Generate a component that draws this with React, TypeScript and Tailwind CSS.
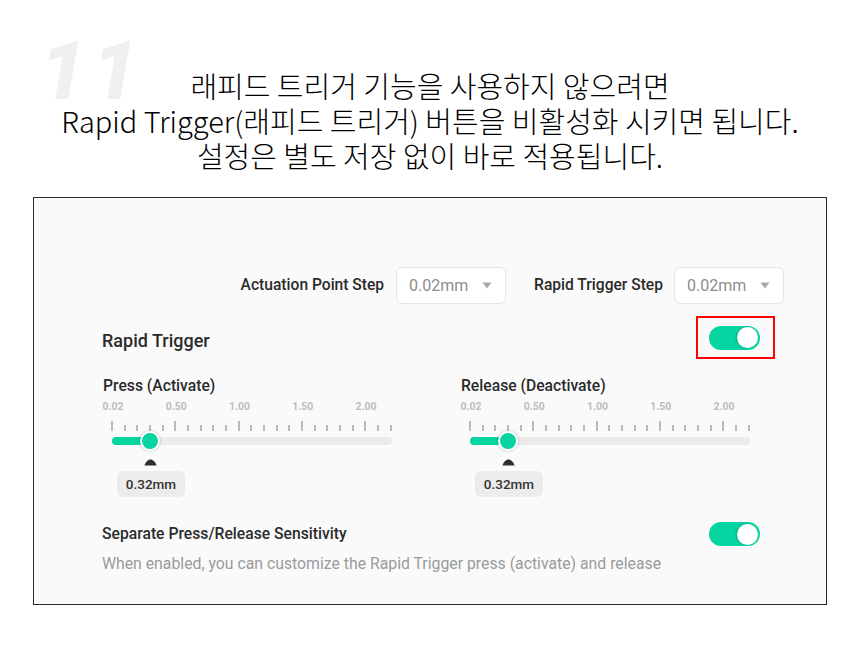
import React from "react";

const TEAL = "bg-[#06d4a1]";

function Toggle() {
  return (
    <div className={`w-[51px] h-[24px] rounded-full ${TEAL} flex items-center justify-end pr-[2px]`}>
      <div className="w-[21px] h-[21px] rounded-full bg-white shadow-[-1px_0_2px_rgba(0,0,0,0.2)]" />
    </div>
  );
}

function Select() {
  return (
    <div className="w-[110px] h-[37px] bg-white border border-[#e6e6e6] rounded-[6px] flex items-center justify-between pl-[12px] pr-[13px]">
      <span className="text-[16px] text-[#8d8d8d]">0.02mm</span>
      <svg width="10" height="7" viewBox="0 0 10 7">
        <path d="M0.5 0.5 H9.5 L5 6.5 Z" fill="#a9a9a9" />
      </svg>
    </div>
  );
}

const labels = ["0.02", "0.50", "1.00", "1.50", "2.00"];

function Slider({ title }: { title: string }) {
  const ticks = Array.from({ length: 23 }, (_, i) => i);
  return (
    <div className="flex flex-col w-[358px]">
      <div className="text-[15.7px] leading-[20px] font-medium text-[#2b2b2b] pl-[1px]">{title}</div>
      <div className="mt-[5px] ml-[-4px] w-[283px] flex justify-between">
        {labels.map((l) => (
          <span key={l} className="w-[30px] text-center text-[10.5px] leading-[12px] font-bold text-[#bdbdbd]">
            {l}
          </span>
        ))}
      </div>
      <div className="mt-[8px] ml-[9px] w-[281px] h-[10px] flex justify-between items-end">
        {ticks.map((i) => (
          <div key={i} className={`w-[2px] bg-[#bababa] ${i % 5 === 0 ? "h-[10px]" : "h-[6px]"}`} />
        ))}
      </div>
      <div className="relative mt-[6px] ml-[10px] w-[280px] h-[8px] rounded-full bg-[#ebebeb]">
        <div className={`absolute left-0 top-0 h-[8px] w-[40px] rounded-full ${TEAL}`} />
        <div className={`absolute left-[28px] top-[-6px] w-[20px] h-[20px] rounded-full ${TEAL} border-2 border-white shadow-[0_0_3px_rgba(0,0,0,0.25)]`} />
      </div>
      <svg className="mt-[14px] ml-[42px]" width="13" height="7" viewBox="0 0 13 7">
        <path d="M0.5 6.5 C1.5 3 4 0.5 6.5 0.5 C9 0.5 11.5 3 12.5 6.5 Z" fill="#2f2f2f" />
      </svg>
      <div className="mt-[5px] ml-[15px] w-[68px] h-[26px] rounded-[6px] bg-[#ececec] flex items-center justify-center text-[13.5px] font-medium text-[#333]">
        0.32mm
      </div>
    </div>
  );
}

export default function App() {
  return (
    <div className="relative w-[860px] h-[651px] bg-white overflow-hidden font-['Roboto',sans-serif]">
      {/* big step number */}
      <div className="absolute left-[40px] top-[30px] text-[82px] leading-none font-black italic tracking-[6px] text-[#f0f0f0] font-['Roboto',sans-serif]">
        11
      </div>

      {/* title */}
      <div className="relative pt-[68px] text-center text-[29px] leading-[35px] font-light text-black font-['Noto_Sans_CJK_KR','Noto_Sans',sans-serif]">
        <p>래피드 트리거 기능을 사용하지 않으려면</p>
        <p>Rapid Trigger(래피드 트리거) 버튼을 비활성화 시키면 됩니다.</p>
        <p>설정은 별도 저장 없이 바로 적용됩니다.</p>
      </div>

      {/* panel */}
      <div className="mt-[24px] mx-[33px] w-[794px] border border-[#2a2a2a] bg-[#fafafa] pt-[69px] pb-[30px]">
        <div className="flex items-center justify-end pr-[42px]">
          <span className="text-[15.6px] font-medium text-[#2b2b2b] mr-[12px]">Actuation Point Step</span>
          <Select />
          <span className="text-[15.6px] font-medium text-[#2b2b2b] ml-[28px] mr-[11px]">Rapid Trigger Step</span>
          <Select />
        </div>

        <div className="mt-[12px] flex items-center justify-between pl-[68px] pr-[51px]">
          <span className="pt-[5px] text-[18px] font-medium text-[#2b2b2b]">Rapid Trigger</span>
          <div className="w-[79px] h-[43px] border-2 border-[#ff0000] flex items-center pl-[11px]">
            <Toggle />
          </div>
        </div>

        <div className="mt-[17px] flex pl-[68px]">
          <Slider title="Press (Activate)" />
          <Slider title="Release (Deactivate)" />
        </div>

        <div className="mt-[25px] flex items-center justify-between pl-[68px] pr-[66px]">
          <span className="text-[15.7px] font-medium text-[#2b2b2b]">Separate Press/Release Sensitivity</span>
          <Toggle />
        </div>
        <p className="mt-[8px] pl-[68px] text-[15.8px] leading-[20px] text-[#9b9b9b]">
          When enabled, you can customize the Rapid Trigger press (activate) and release
        </p>
      </div>
    </div>
  );
}
